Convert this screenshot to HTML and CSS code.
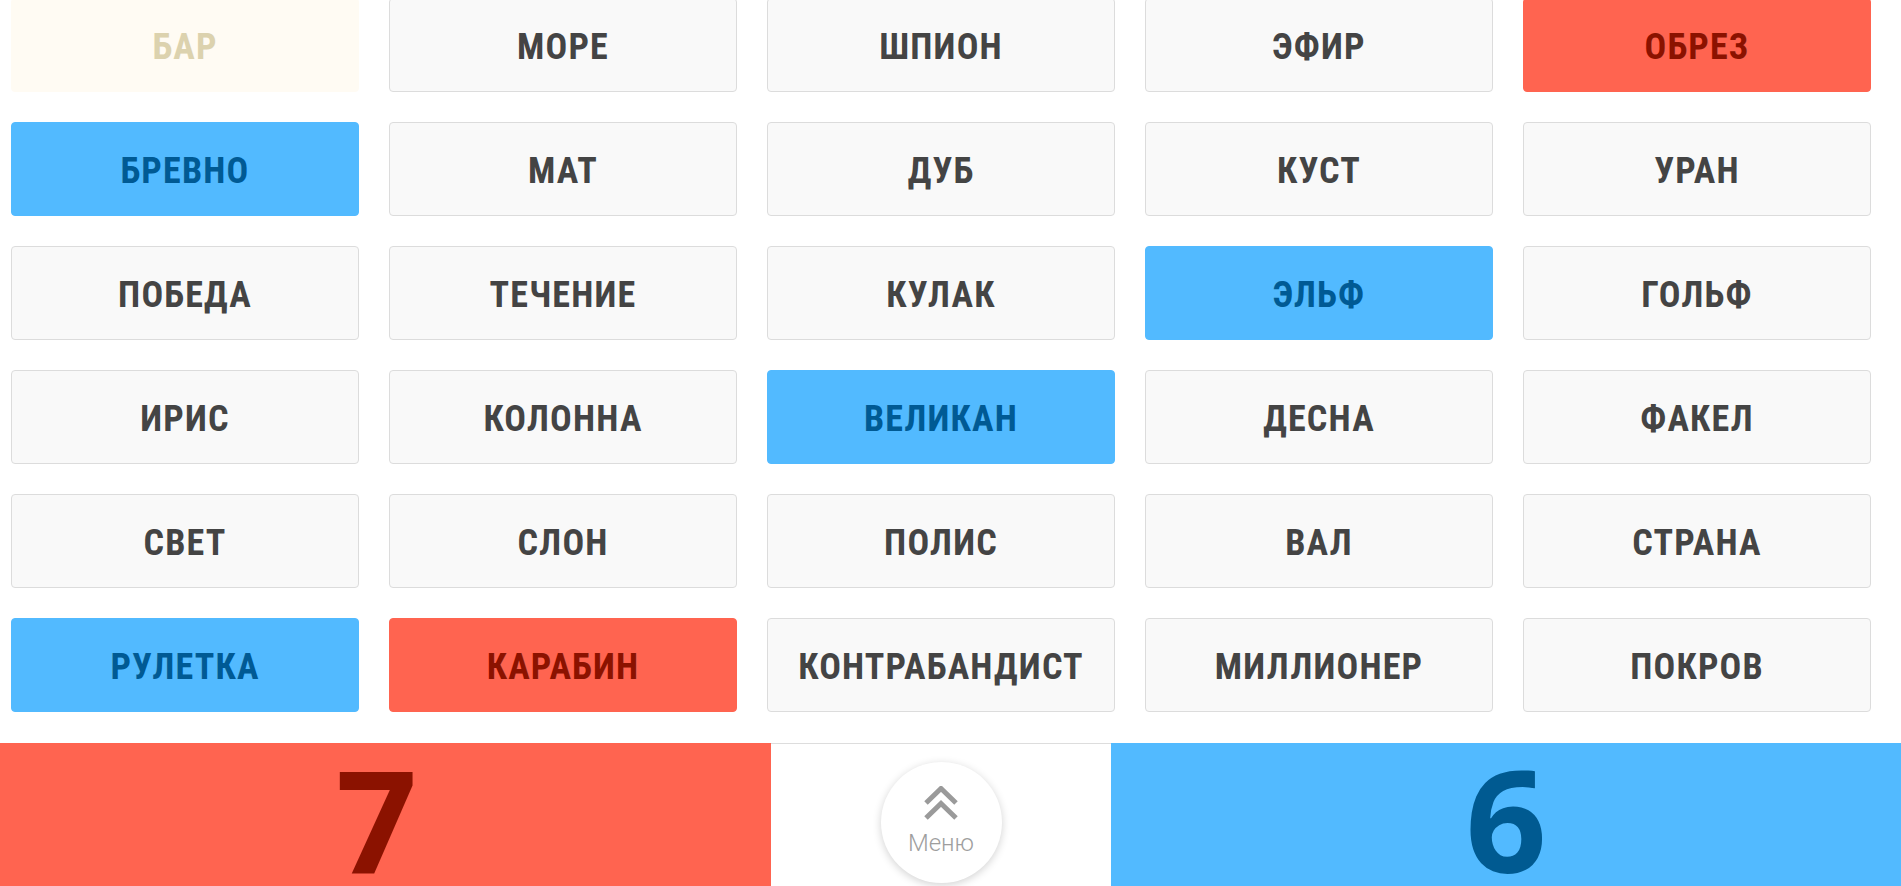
FILE: index.html
```html
<!DOCTYPE html>
<html lang="ru">
<head>
<meta charset="utf-8">
<title>Игра</title>
<link rel="stylesheet" href="styles.css">
</head>
<body>
<div class="board">
  <div class="card neutral">БАР</div>
  <div class="card">МОРЕ</div>
  <div class="card">ШПИОН</div>
  <div class="card">ЭФИР</div>
  <div class="card red">ОБРЕЗ</div>

  <div class="card blue">БРЕВНО</div>
  <div class="card">МАТ</div>
  <div class="card">ДУБ</div>
  <div class="card">КУСТ</div>
  <div class="card">УРАН</div>

  <div class="card">ПОБЕДА</div>
  <div class="card">ТЕЧЕНИЕ</div>
  <div class="card">КУЛАК</div>
  <div class="card blue">ЭЛЬФ</div>
  <div class="card">ГОЛЬФ</div>

  <div class="card">ИРИС</div>
  <div class="card">КОЛОННА</div>
  <div class="card blue">ВЕЛИКАН</div>
  <div class="card">ДЕСНА</div>
  <div class="card">ФАКЕЛ</div>

  <div class="card">СВЕТ</div>
  <div class="card">СЛОН</div>
  <div class="card">ПОЛИС</div>
  <div class="card">ВАЛ</div>
  <div class="card">СТРАНА</div>

  <div class="card blue">РУЛЕТКА</div>
  <div class="card red">КАРАБИН</div>
  <div class="card">КОНТРАБАНДИСТ</div>
  <div class="card">МИЛЛИОНЕР</div>
  <div class="card">ПОКРОВ</div>
</div>

<div class="scorebar">
  <div class="score score-red">7</div>
  <div class="middle">
    <button class="menu-btn" type="button">
      <svg class="chevrons" width="34" height="34" viewBox="0 0 34 34" aria-hidden="true">
        <polyline points="2,17 17,2.5 32,17" fill="none" stroke="#9a9a9a" stroke-width="5"/>
        <polyline points="2,32 17,17.5 32,32" fill="none" stroke="#9a9a9a" stroke-width="5"/>
      </svg>
      <span class="menu-label">Меню</span>
    </button>
  </div>
  <div class="score score-blue">6</div>
</div>
</body>
</html>
```
FILE: styles.css
```css
html, body {
  margin: 0;
  padding: 0;
  background: #ffffff;
}

body {
  width: 1901px;
  height: 886px;
  overflow: hidden;
  font-family: "Roboto Condensed", Roboto, "Noto Sans", sans-serif;
}

.board {
  display: grid;
  grid-template-columns: repeat(5, 348px);
  grid-auto-rows: 94px;
  column-gap: 30px;
  row-gap: 30px;
  padding: 0 30px 0 11px;
  margin-top: -2px;
  margin-bottom: 31px;
}

.card {
  box-sizing: border-box;
  display: flex;
  align-items: center;
  justify-content: center;
  padding-top: 3px;
  background: #f9f9f9;
  border: 1px solid #dcdcdc;
  border-radius: 4px;
  color: #444444;
  font-family: "Roboto Condensed", Roboto, sans-serif;
  font-stretch: 80%;
  font-weight: 700;
  font-size: 36px;
  letter-spacing: 1.2px;
}

.card.neutral {
  background: #fffbf3;
  border-color: #fffbf3;
  color: #dcd2ae;
}

.card.blue {
  background: #52baff;
  border-color: #52baff;
  color: #005a94;
}

.card.red {
  background: #ff6450;
  border-color: #ff6450;
  color: #8b1200;
}

.scorebar {
  display: flex;
  height: 143px;
}

.score {
  box-sizing: border-box;
  display: flex;
  justify-content: center;
  padding-top: 4px;
  font-family: "Open Sans", "Noto Sans", sans-serif;
  font-weight: 700;
  font-size: 142px;
  line-height: 142px;
}

.score-red {
  width: 771px;
  padding-right: 18px;
  background: #ff6450;
  color: #8b1200;
}

.score-blue {
  flex: 1;
  background: #52baff;
  color: #005a91;
}

.middle {
  box-sizing: border-box;
  width: 340px;
  border-top: 1px solid #dddddd;
  display: flex;
  justify-content: center;
}

.menu-btn {
  box-sizing: border-box;
  margin-top: 18px;
  width: 121px;
  height: 121px;
  border-radius: 50%;
  border: none;
  background: #ffffff;
  box-shadow: 0 2px 9px rgba(0, 0, 0, 0.18);
  padding: 24px 0 0 0;
  display: flex;
  flex-direction: column;
  align-items: center;
}

.chevrons {
  display: block;
}

.menu-label {
  margin-top: 11px;
  font-family: Roboto, sans-serif;
  font-weight: 300;
  font-size: 24px;
  line-height: 24px;
  color: #9e9e9e;
}
```
